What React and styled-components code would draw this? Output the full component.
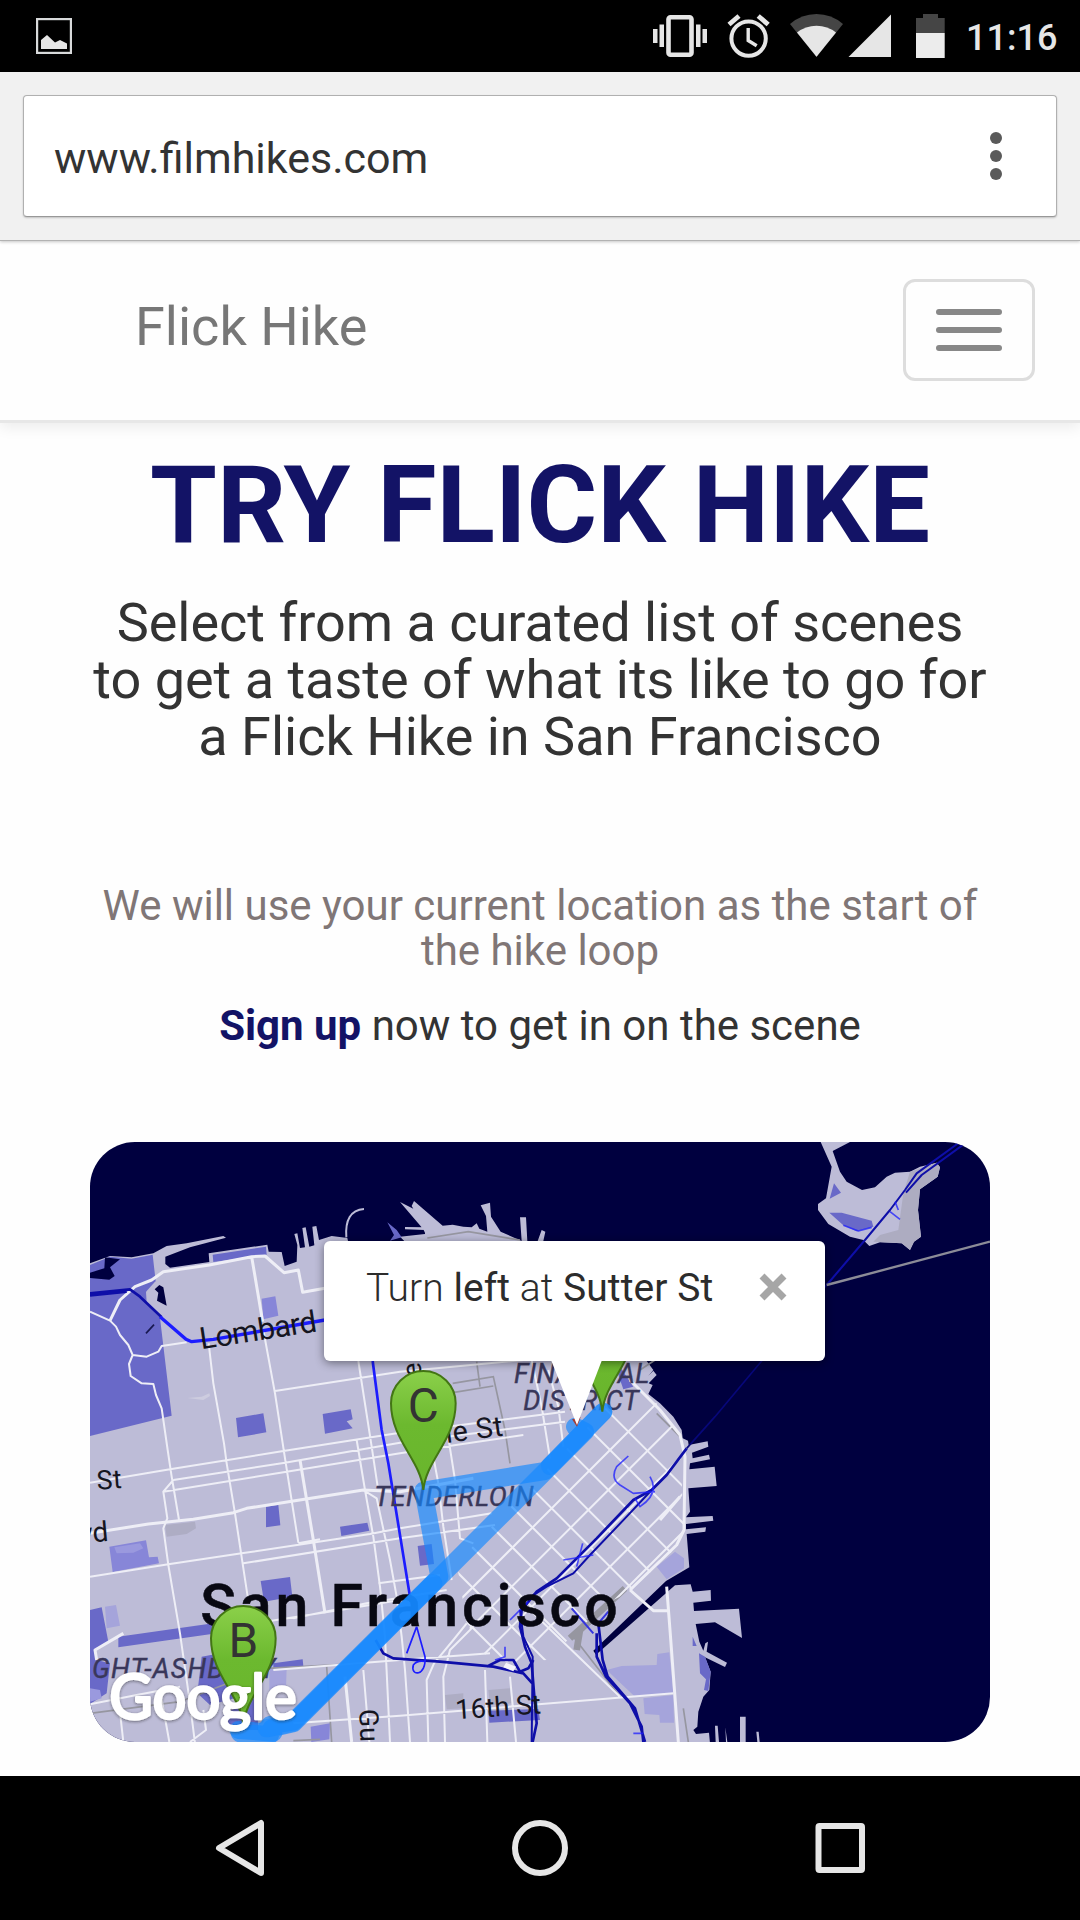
import React from 'react';
import styled, { createGlobalStyle } from 'styled-components';

const GlobalStyle = createGlobalStyle`
  * { box-sizing: border-box; }
  body { margin: 0; background: #fff; font-family: Roboto, 'Noto Sans', sans-serif; }
  h1, p { margin: 0; font-weight: 400; }
`;

const Screen = styled.div`
  width: 1080px;
  height: 1920px;
  display: flex;
  flex-direction: column;
  background: #fefefe;
  overflow: hidden;
`;

const StatusBar = styled.header`
  flex: none;
  height: 72px;
  display: flex;
  align-items: center;
  justify-content: space-between;
  padding: 0 24px 0 36px;
  background: #000;
`;

const StatusGroup = styled.div`
  display: flex;
  align-items: center;
`;

const Clock = styled.span`
  margin-left: 21px;
  padding-top: 3px;
  width: 90px;
  font-size: 36px;
  font-weight: 500;
  line-height: 44px;
  color: #e6e6e6;
  white-space: nowrap;
`;

const BrowserBar = styled.div`
  flex: none;
  height: 169px;
  padding: 23px 23px 0;
  background: #f1f1f1;
  border-bottom: 1px solid #b2b2b2;
  box-shadow: 0 1px 3px rgba(0, 0, 0, 0.22);
  z-index: 1;
`;

const AddressBox = styled.div`
  height: 122px;
  display: flex;
  align-items: center;
  justify-content: space-between;
  padding: 0 54px 0 30px;
  background: #fff;
  border: 1px solid #b0b0b0;
  border-bottom-color: #989898;
  border-radius: 4px;
  box-shadow: 0 1px 2px rgba(0, 0, 0, 0.2);
`;

const Address = styled.span`
  padding-top: 4px;
  font-size: 43px;
  line-height: 52px;
  color: #333;
`;

const MenuDots = styled.div`
  display: flex;
  flex-direction: column;
  gap: 6px;
`;

const Dot = styled.i`
  width: 12px;
  height: 12px;
  border-radius: 50%;
  background: #5a5a5a;
`;

const SiteNav = styled.nav`
  flex: none;
  height: 182px;
  display: flex;
  align-items: flex-start;
  justify-content: space-between;
  padding: 38px 45px 0 135px;
  border-bottom: 3px solid #e7e7e7;
  box-shadow: 0 4px 14px rgba(0, 0, 0, 0.08);
`;

const Brand = styled.span`
  padding-top: 18px;
  font-size: 54px;
  line-height: 60px;
  color: #777;
`;

const Toggle = styled.button`
  width: 132px;
  height: 102px;
  display: flex;
  flex-direction: column;
  align-items: center;
  justify-content: center;
  gap: 12px;
  padding: 0;
  background: transparent;
  border: 3px solid #ddd;
  border-radius: 12px;
`;

const ToggleBar = styled.i`
  width: 66px;
  height: 6px;
  border-radius: 3px;
  background: #888;
`;

const Main = styled.main`
  flex: 1;
  display: flex;
  flex-direction: column;
  align-items: center;
  text-align: center;
  color: #333;
`;

const Title = styled.h1`
  margin-top: 23px;
  font-size: 108px;
  line-height: 118px;
  font-weight: 700;
  color: #131366;
  white-space: nowrap;
`;

const Lead = styled.p`
  margin-top: 30px;
  width: 920px;
  font-size: 54px;
  line-height: 57px;
  white-space: nowrap;
`;

const Note = styled.p`
  margin-top: 118px;
  width: 900px;
  font-size: 42px;
  line-height: 45px;
  color: #807676;
`;

const SignUpLine = styled.p`
  margin-top: 30px;
  font-size: 42px;
  line-height: 46px;
`;

const SignUp = styled.a`
  font-weight: 700;
  color: #131366;
`;

const MapCard = styled.section`
  position: relative;
  flex: none;
  margin-top: 93px;
  width: 900px;
  height: 600px;
  border-radius: 45px;
  overflow: hidden;
  background: #00003f;
`;

const MapCanvas = styled.svg`
  display: block;
  width: 900px;
  height: 600px;
`;

const InfoWindow = styled.div`
  position: absolute;
  left: 234px;
  top: 99px;
  width: 501px;
  height: 120px;
  display: flex;
  align-items: flex-start;
  justify-content: space-between;
  padding: 24px 38px 0 42px;
  background: #fff;
  border-radius: 6px;
  box-shadow: 0 2px 10px rgba(0, 0, 0, 0.45);
`;

const InfoTail = styled.div`
  position: absolute;
  left: 461px;
  top: 218px;
  width: 51px;
  height: 65px;
  background: #fff;
  clip-path: polygon(0 0, 100% 0, 51% 100%);
`;

const InfoText = styled.span`
  font-size: 39px;
  line-height: 46px;
  font-weight: 300;
  letter-spacing: 0.08px;
  color: #2c2c2c;
  white-space: nowrap;

  b { font-weight: 400; }
`;

const CloseIcon = styled.svg`
  margin-top: 8px;
`;

const SystemNav = styled.footer`
  flex: none;
  height: 144px;
  display: flex;
  align-items: center;
  justify-content: space-between;
  padding: 0 212px;
  background: #000;
`;

const IconSvg = styled.svg`
  display: block;
`;

const Icon = ({ w, h, children }) => (
  <IconSvg width={w} height={h} viewBox={`0 0 ${w} ${h}`}>
    {children}
  </IconSvg>
);

const StatusIcons = () => (
  <svg width="292" height="72" viewBox="653 0 292 72" fill="#e6e6e6">
    <rect x="668.5" y="17.2" width="23" height="37.6" rx="2" fill="none" stroke="#e6e6e6" strokeWidth="4.6" />
    <path d="M653 29h4.5v14H653zM659.5 24.500h4.500v22.500h-4.500zM696 24.500h4.500v22.500h-4.500zM702.500 29h4.500v14h-4.500z" />
    <circle cx="748.600" cy="38.600" r="17.200" fill="none" stroke="#e6e6e6" strokeWidth="4" />
    <path d="M748.200 28v12.500l8.500 5.200" fill="none" stroke="#e6e6e6" strokeWidth="3.400" />
    <path d="M729 24.500l10-8.500M768.200 24.500l-10-8.500" stroke="#e6e6e6" strokeWidth="4.800" />
    <path d="M790 24q11.500-10 26.500-10t26.500 10l-26.500 33z" fill="#454545" />
    <path d="M797 32.500q8.500-6.800 19.500-6.800t19.500 6.800l-19.500 24.300z" />
    <path d="M848.500 57L891 14.500V57z" />
    <path d="M916 18h7v-4h15v4h6.700v15H916z" fill="#454545" />
    <path d="M916 33h28.700v25H916z" fill="#ececec" />
  </svg>
);

/* Map drawing: 3 units per screen pixel. */
const LAND =
  'M30 400L90 378L155 382L220 370L260 348L320 340L430 318L438 323L330 352L256 380L256 402L270 413L388 396L386 370L562 344L566 365L605 366L614 408L650 395L652 345L643 312L652 310L660 354L675 352L667 294L677 292L688 350L703 346L697 290L709 288L717 330L755 318L802 324L810 360L1000 360L960 320L1035 312L1035 300L975 298V291L1032 292L1042 298L1074 300L1070 320L1042 324L1030 298L960 216L1000 236L995 228L1002 213L1088 287L1118 284L1150 290L1175 292L1190 280L1198 296L1222 305L1218 258L1202 226L1230 218L1233 260L1262 305L1325 333L1320 262H1338L1342 333H1373L1385 300L1396 305L1390 333L1450 400L1600 600L1700 693L1720 720L1705 738L1720 722L1730 735L1706 760L1718 765L1705 792L1740 820L1780 860L1805 900L1808 925L1824 932L1826 945L1883 934L1885 950L1836 968L1838 985L1887 974L1890 988L1830 1000L1828 1018L1904 1010L1910 1068L1825 1075L1830 1145L1818 1162L1898 1158L1900 1172L1818 1182V1198L1878 1192L1876 1205L1820 1212L1828 1312L1758 1353L1540 1562L1548 1574L1785 1366L1832 1363L1838 1385L1892 1380L1893 1412L1840 1418L1842 1443L1977 1436L1986 1524L1905 1477L1847 1482L1858 1535L1870 1562L1876 1540L1884 1535L1880 1565L1941 1598L1935 1611L1875 1582L1892 1625L1888 1680L1870 1700L1855 1745L1852 1790L1840 1800L1848 1812L1887 1808L1890 1840H30Z';

const PARKS =
  'M30 405L90 380L155 386L218 374L230 480L275 857L30 918ZM398 374L558 350L560 374L400 396ZM468 864L550 850L559 907L474 922ZM728 852L812 838L818 868L800 874L818 895L735 911ZM558 1130L595 1125L601 1186L558 1192ZM780 1190L862 1178L868 1202L784 1218ZM542 1353L630 1341L637 1400L552 1415ZM30 1440L65 1432L85 1535L45 1560L50 1590L90 1600L80 1690L30 1722ZM115 1520L400 1480L395 1512L115 1552ZM365 1580L470 1560L480 1700L390 1725L352 1690ZM580 1600L668 1588L670 1608L580 1614ZM1013 1248L1055 1242L1062 1302L1020 1307ZM1225 1742L1375 1737L1380 1770L1228 1778ZM1610 720L1620 710L1660 770L1630 778ZM922 277L950 300L965 322L930 332L942 315ZM1857 1570L1875 1580L1892 1625L1885 1683L1872 1680L1878 1648L1860 1630ZM1838 1520L1850 1548H1838ZM430 1755L530 1700L535 1800L460 1800Z';

const LIGHT_PARKS =
  'M545 506L586 499L595 557L550 568ZM88 1250L198 1231L207 1282L233 1280L237 1300L98 1326ZM692 1790L750 1780L748 1828L694 1836Z';

const PALE_PARKS =
  'M75 1430L108 1425L120 1487L80 1495ZM568 1615L620 1612L618 1675L568 1680ZM1730 1310L1785 1265L1812 1285V1315L1760 1348ZM1580 1620L1625 1608L1730 1605L1732 1572L1768 1567L1780 1690L1665 1700ZM1690 1705L1780 1695L1782 1778H1740L1738 1755L1694 1752Z';

const ROADS =
  'M30 545L90 572L108 590L120 615L145 645L158 675L147 702L152 738L185 760L220 762L228 795L245 835L263 960L275 1040L297 1170M158 675L200 680L235 665L245 648L320 637M386 640L400 760L432 940L440 1000L465 1150L503 1400M550 600L585 790L615 985L655 1238M585 783L960 725L1330 690M835 693L875 950L893 1070M30 1058L270 1018L610 963L960 908L1455 845M280 1050L615 998L960 938L1455 875M250 1085L620 1025L960 970L1330 915M280 1050L250 1085L262 1165L250 1195L265 1305L300 1510L330 1720L345 1840M30 1340L265 1303L485 1270L870 1212L960 1195L1235 1150M490 1300L960 1225L1245 1185M830 930L855 1080L880 1220L900 1370L915 1520L930 1836M850 1080L890 1105L930 1290L950 1400L965 1520M655 1240L720 1228M895 1360L1080 1335M640 1465L860 1420L1100 1380M400 1500L780 1440L960 1410M580 1620L960 1590L1230 1570M30 1723L170 1695L300 1670M640 1780L960 1757L1780 1690M850 1620L868 1836M965 1520L975 1620L990 1836M1045 1836L1040 1650L1062 1600L1120 1530L1160 1480M1095 1836L1090 1640L1110 1560L1180 1490M1222 1836L1215 1620M1308 1836L1290 1640M1045 900L1075 1060L1090 1190L1115 1350M1095 860L1125 1050L1140 1225L1180 1240M1355 690L1385 830L1410 985M1405 720L1435 830L1450 950M370 1740L378 1800L330 1836M115 1700L130 1836M240 1680L268 1836M1340 1430L1620 1700';

const MAIN_ROADS =
  'M90 572L120 510L165 470L215 450L250 425L388 405L515 380L555 378L612 428L655 420L668 487L735 475M30 1210L205 1182L340 1168L460 1148L500 1135L640 1113L850 1080L960 1085L1180 1045M515 380L548 575M660 990L700 1230L735 1450M795 1640L815 1836M50 1590L45 1560L130 1510M1650 750L1740 840L1800 915L1815 980L1812 1200L1790 1245L1650 1380M1760 1370L1770 1500L1795 1836M1650 1380L1720 1442H1765M1800 1100L1740 1170';

const GRID_A = [750, 865, 985, 1100, 1215];
const GRID_B = [-315, -195, -75, 45, 165, 280, 385, 505, 630, 740];

const Pin = ({ x, y, letter }) => (
  <g transform={`translate(${x} ${y})`}>
    <path
      d="M0 0C-8-90-97-150-97-260A97 97 0 0 1 97-260C97-150 8-90 0 0Z"
      fill="url(#pin)"
      stroke="#437614"
      strokeWidth="6"
    />
    {letter && <text y="-204" fontSize="143" fill="#333" textAnchor="middle">{letter}</text>}
  </g>
);

const CityMap = () => (
  <MapCanvas viewBox="30 36 2700 1800" fontFamily="Roboto, 'Noto Sans', sans-serif">
    <defs>
      <linearGradient id="pin" x1="0" y1="0" x2="0" y2="1">
        <stop offset="0" stopColor="#8bd04a" />
        <stop offset="0.45" stopColor="#6cb92f" />
        <stop offset="1" stopColor="#69b52c" />
      </linearGradient>
      <clipPath id="soma">
        <path d="M1130 1300L1620 790L1700 780L1800 915L1812 1230L1650 1385L1580 1420L1400 1590L1230 1600L1160 1480Z" />
      </clipPath>
      <filter id="logoShadow" x="-10%" y="-20%" width="120%" height="150%">
        <feDropShadow dx="0" dy="3" stdDeviation="5" floodColor="#222" floodOpacity="0.55" />
      </filter>
    </defs>
    <path d={LAND} fill="#bdbcd7" />
    <path d="M799 322C795 270 812 240 852 237" fill="none" stroke="#bdbcd7" strokeWidth="6" />
    <path d="M1905 1787h8l4 49h-10zM1980 1760h17v76h-17zM2029 1805h7l3 31h-7zM1936 1792l6 44h-4z" fill="#bdbcd7" />
    <path d={PARKS} fill="#6969c8" />
    <path d={LIGHT_PARKS} fill="#8786d8" />
    <path d={PALE_PARKS} fill="#a5a4db" />
    <path d="M103 1252L180 1240L190 1255L160 1268L110 1270ZM30 1675L60 1680L65 1705L30 1715Z" fill="#9a99de" />
    <path d="M240 562L200 520L198 485L225 455L258 440V560Z" fill="#bdbcd7" />
    <path d="M30 428L73 415L75 382L120 388L90 412L104 438L88 449L30 444ZM224 478L238 465L250 472L260 527L231 512L235 488Z" fill="#00003f" />
    <path d="M198 610L222 584" stroke="#181850" strokeWidth="5" />
    <path d="M255 1185L345 1175L348 1195L320 1212L260 1220ZM1095 1695L1150 1690L1150 1735L1100 1738ZM1225 1680L1290 1675L1295 1720L1230 1725Z" fill="#aeadc4" />
    <path d="M322 804L365 800L388 790L390 798L370 810Z" fill="#cdccdf" />
    <g fill="none" stroke="#9696a0" strokeWidth="5">
      <path d="M1042 324L1165 305L1320 330M1190 695L1200 770M1118 760L1240 740L1275 900L1290 1000M1118 788L1240 768M30 1750L300 1715L560 1615L850 1600M740 1610L755 1836M640 1832L720 1828M1480 1520L1620 1700M1810 1735L1825 1836" />
      <path d="M1470 1525L1520 1480M1490 1560L1500 1500L1635 1375" strokeWidth="20" />
      <path d="M1680 720L1725 690M1730 850L1800 920M1790 1245L1740 1290" />
    </g>
    <g fill="none" stroke="#eeeef6" strokeLinejoin="round">
      <path d={ROADS} strokeWidth="6" />
      <path d={MAIN_ROADS} strokeWidth="9" />
      <g clipPath="url(#soma)" strokeWidth="6">
        {GRID_A.map((c) => <path key={c} d={`M900 ${900 + c}L${900 + c} 900L${1000 + c} 800`} />)}
        {GRID_B.map((c) => <path key={c} d={`M${800 + c} 800L${1700 + c} 1700`} />)}
      </g>
    </g>

    <path d="M2222 36H2310L2258 63L2280 125L2300 155L2346 180L2385 172L2420 140L2445 128L2490 125L2520 110L2570 98L2580 112L2573 140L2520 178L2514 240L2523 320L2502 335L2490 360L2465 340L2400 337L2368 348L2350 330L2310 320L2245 282L2214 240V222L2238 205L2255 110Z" fill="#bdbcd7" />
    <path d="M2490 125L2570 98L2580 112L2573 140L2520 178L2514 240L2523 320L2502 335L2490 360L2465 340L2380 335L2400 315L2455 300L2470 190Z" fill="#adacc1" />
    <path d="M2262 160L2283 188L2249 206ZM2248 248L2285 248L2375 272L2380 290L2330 304L2290 286Z" fill="#6969c8" />

    <g fill="none" stroke="#0e0ea8" strokeLinejoin="round">
      <path d="M2640 36L2510 130L2475 180L2430 240L2355 330L2240 465M2655 40L2525 135L2478 188" strokeWidth="6" />
      <path d="M2240 465L2045 693L1905 860L1820 955" strokeWidth="5" stroke="#07077a" />
      <path d="M1820 955L1760 1035L1715 1080L1660 1110L1550 1225L1430 1345L1370 1385L1325 1440L1320 1490L1335 1550L1355 1600L1363 1700L1370 1780L1358 1836" strokeWidth="8" />
      <path d="M1715 1080L1640 1160L1530 1275L1480 1330L1400 1370L1345 1405M1320 1440L1330 1520L1358 1580L1355 1836" strokeWidth="6" />
      <path d="M887 1530L910 1570L940 1585L1080 1595L1240 1610L1330 1630L1357 1660M1220 1610L1260 1590L1300 1590L1320 1625L1345 1615L1360 1590" strokeWidth="8" />
      <path d="M1550 1510L1550 1580L1578 1640L1650 1720L1685 1790L1690 1836M1555 1480L1568 1590L1583 1640L1665 1735L1695 1836" strokeWidth="8" />
      <path d="M1475 1435L1540 1510M1585 1445L1555 1480" strokeWidth="6" stroke="#3535e0" />
      <path d="M30 490L150 478L180 500L245 562M30 496L140 485" strokeWidth="8" />
    </g>
    <path d="M1278 1598L1308 1610L1300 1624L1270 1612Z" fill="#f4f4fa" />
    <g fill="none" stroke="#1c1cff" strokeLinejoin="round">
      <path d="M240 560L318 628L335 635L400 628L735 570" strokeWidth="10" />
      <path d="M878 693L905 900L925 1000L990 1400" strokeWidth="8" />
      <path d="M1010 1490L980 1570M1010 1490L1035 1580C1040 1640 990 1640 1000 1605Q1010 1590 1035 1594" strokeWidth="5" />
      <path d="M1645 978L1610 1010Q1590 1045 1620 1065L1660 1090L1725 1085M1710 1040Q1740 1090 1680 1130L1665 1105M1450 1290L1540 1275M1508 1240L1490 1310M1290 1470L1345 1415M1275 1550L1275 1580L1245 1590M2445 215L2455 240M2430 245L2460 268M2290 286L2335 303L2375 292M1660 1810H1690" strokeWidth="5" opacity="0.75" />
    </g>
    <path d="M2240 465L2730 335" stroke="#8c8c98" strokeWidth="7" />

    <g fill="#151520" fontSize="80">
      <text transform="translate(364 658) rotate(-8.800)" fontSize="91" textLength="354">Lombard</text>
      <text transform="translate(52 1079) rotate(-4)" textLength="75">St</text>
      <text transform="translate(1 1240) rotate(-5)" fontSize="84">yd</text>
      <text transform="translate(994 953) rotate(-7.500)" fontSize="86" textLength="280">Pine St</text>
      <text transform="translate(1128 1768) rotate(-4)" fontSize="82" textLength="257">16th St</text>
      <text transform="translate(838 1738) rotate(88)">Gu</text>
      <text transform="translate(1025 738) rotate(-96)">e</text>
    </g>
    <g fill="#39375a" fontSize="81" fontStyle="italic" stroke="#39375a" strokeWidth="1.200">
      <text x="883" y="1129" textLength="478">TENDERLOIN</text>
      <text x="36" y="1643" textLength="550">GHT-ASHBURY</text>
      <text x="1302" y="759" textLength="406">FINANCIAL</text>
      <text x="1330" y="841" textLength="346">DISTRICT</text>
    </g>
    <text
      x="361"
      y="1488"
      fontSize="177"
      fontWeight="500"
      fill="#080812"
      stroke="#080812"
      strokeWidth="1.500"
      textLength="1252"
    >
      San Francisco
    </text>

    <g fill="none" stroke="#1488ff" strokeWidth="54" strokeLinecap="round" strokeLinejoin="round" strokeOpacity="0.66">
      <path d="M1570 845L1395 1023L1030 1082L1078 1340L640 1775L570 1785L580 1808L475 1800" />
      <path d="M1485 890L1515 905L1350 1070L640 1780L575 1795L570 1815L480 1810" />
      <path d="M1570 845L1410 1008M1060 1360L640 1778L560 1795" strokeOpacity="0.5" />
    </g>
    <path d="M1476 868L1491 890L1502 862Z" fill="#a23a34" />
    <Pin x={1567} y={845} />
    <Pin x={1030} y={1080} letter="C" />
    <Pin x={490} y={1785} letter="B" />
    <text
      x="88"
      y="1768"
      fontFamily="Lato, 'Open Sans', sans-serif"
      fontSize="184"
      fontWeight="400"
      fill="#fff"
      stroke="#fff"
      strokeWidth="8"
      strokeLinejoin="round"
      textLength="562"
      lengthAdjust="spacingAndGlyphs"
      filter="url(#logoShadow)"
    >
      Google
    </text>
  </MapCanvas>
);

export default function App() {
  return (
    <Screen>
      <GlobalStyle />
      <StatusBar>
        <Icon w={36} h={36}>
          <rect x="1" y="1" width="34" height="34" fill="none" stroke="#d8dadb" strokeWidth="2.400" />
          <path d="M5 31V22l6-5 8 7.500 5-2.500 7 3.500V31z" fill="#e6e6e6" />
        </Icon>
        <StatusGroup>
          <StatusIcons />
          <Clock>11:16</Clock>
        </StatusGroup>
      </StatusBar>
      <BrowserBar>
        <AddressBox>
          <Address>www.filmhikes.com</Address>
          <MenuDots>
            <Dot />
            <Dot />
            <Dot />
          </MenuDots>
        </AddressBox>
      </BrowserBar>
      <SiteNav>
        <Brand>Flick Hike</Brand>
        <Toggle aria-label="Toggle navigation">
          <ToggleBar />
          <ToggleBar />
          <ToggleBar />
        </Toggle>
      </SiteNav>
      <Main>
        <Title>TRY FLICK HIKE</Title>
        <Lead>
          Select from a curated list of scenes
          <br />
          to get a taste of what its like to go for
          <br />
          a Flick Hike in San Francisco
        </Lead>
        <Note>
          We will use your current location as the start of
          <br />
          the hike loop
        </Note>
        <SignUpLine>
          <SignUp>Sign up</SignUp> now to get in on the scene
        </SignUpLine>
        <MapCard>
          <CityMap />
          <InfoWindow>
            <InfoText>
              Turn <b>left</b> at <b>Sutter St</b>
            </InfoText>
            <CloseIcon width="28" height="28" viewBox="0 0 28 28">
              <path d="M3 3l22 22M25 3L3 25" stroke="#a6a6a6" strokeWidth="7" />
            </CloseIcon>
          </InfoWindow>
          <InfoTail />
        </MapCard>
      </Main>
      <SystemNav>
        <Icon w={56} h={60}>
          <path d="M49 5v50L7 30z" fill="none" stroke="#e6e6e6" strokeWidth="6" strokeLinejoin="round" />
        </Icon>
        <Icon w={56} h={56}>
          <circle cx="28" cy="28" r="25" fill="none" stroke="#e6e6e6" strokeWidth="6" />
        </Icon>
        <Icon w={56} h={56}>
          <rect x="6.500" y="6" width="43.500" height="44" rx="1" fill="none" stroke="#e6e6e6" strokeWidth="6" />
        </Icon>
      </SystemNav>
    </Screen>
  );
}
